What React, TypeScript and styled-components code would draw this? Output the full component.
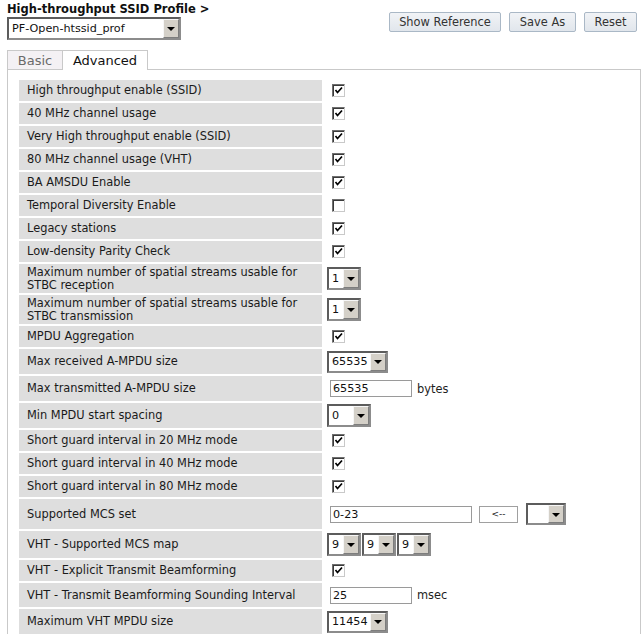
import React from "react";
import styled, { createGlobalStyle } from "styled-components";

const GlobalStyle = createGlobalStyle`
  html, body { margin: 0; padding: 0; background: #fff; }
  body { font-family: "DejaVu Sans", Verdana, sans-serif; font-size: 11px; color: #1e1e1e; }
  * { box-sizing: border-box; }
`;

const Page = styled.div`
  width: 641px;
  padding-left: 7px;
  overflow: hidden;
`;

const Header = styled.div`
  display: flex;
  justify-content: space-between;
  align-items: flex-start;
  padding-right: 4px;
`;

const HeaderLeft = styled.div`
  display: flex;
  flex-direction: column;
`;

const Title = styled.div`
  font-weight: bold;
  font-size: 11.5px;
  line-height: 13px;
  padding-top: 3px;
  color: #101010;
`;

const ButtonBar = styled.div`
  display: flex;
  gap: 8px;
  padding-top: 12px;
`;

const Button = styled.button<{ $w: number }>`
  width: ${(p) => p.$w}px;
  height: 20px;
  padding: 0;
  font-family: "DejaVu Sans", Verdana, sans-serif;
  font-size: 11.4px;
  color: #333;
  background: linear-gradient(#f1f3f6, #e1e6ec);
  border: 1px solid #aab8c6;
  border-radius: 2px;
  cursor: pointer;
`;

const SelectBox = styled.div<{ $w: number; $h?: number }>`
  display: inline-flex;
  width: ${(p) => p.$w}px;
  height: ${(p) => p.$h ?? 22}px;
  border-style: solid;
  border-width: 2px;
  border-color: #5c5c5c #8c8c8c #8c8c8c #5c5c5c;
  background: #fff;
  flex: none;
`;

const SelectValue = styled.div`
  flex: 1;
  display: flex;
  align-items: center;
  padding-left: 3px;
  font-size: 11.2px;
  color: #111;
  white-space: nowrap;
  overflow: hidden;
`;

const SelectArrow = styled.div`
  width: 16px;
  display: flex;
  align-items: center;
  justify-content: center;
  background: #d4d0c8;
  border-style: solid;
  border-width: 1px;
  border-color: #f6f6f6 #7d7d7d #7d7d7d #f6f6f6;
  &::after {
    content: "";
    border-left: 4px solid transparent;
    border-right: 4px solid transparent;
    border-top: 4px solid #000;
    margin-top: 1px;
  }
`;

const Select: React.FC<{ value: string; w: number; h?: number }> = ({ value, w, h }) => (
  <SelectBox $w={w} $h={h}>
    <SelectValue>{value}</SelectValue>
    <SelectArrow />
  </SelectBox>
);

const TopSelectWrap = styled.div`
  margin-top: 1px;
`;

const TabBar = styled.div`
  display: flex;
  margin-top: 10px;
  height: 20px;
  width: 634px;
`;

const Tab = styled.div<{ $active?: boolean; $w: number }>`
  width: ${(p) => p.$w}px;
  display: flex;
  align-items: center;
  justify-content: center;
  font-size: 13px;
  color: ${(p) => (p.$active ? "#111" : "#6a6a6a")};
  background: ${(p) => (p.$active ? "#fff" : "#f4f1f4")};
  border-top: 1px solid #c9c9c9;
  border-left: 1px solid #c9c9c9;
  border-right: ${(p) => (p.$active ? "1px solid #c9c9c9" : "none")};
  border-bottom: ${(p) => (p.$active ? "none" : "1px solid #c9c9c9")};
`;

const TabFiller = styled.div`
  flex: 1;
  border-bottom: 1px solid #c9c9c9;
`;

const Panel = styled.div`
  width: 634px;
  border-left: 1px solid #c9c9c9;
  border-right: 1px solid #c9c9c9;
  padding: 10px 0 0 11px;
`;

const Table = styled.div`
  display: grid;
  grid-template-columns: 303px 1fr;
  column-gap: 2px;
  row-gap: 2px;
`;

const LabelCell = styled.div<{ $h: number }>`
  height: ${(p) => p.$h}px;
  background: #dedede;
  display: flex;
  align-items: center;
  padding: 0 7px 0 8px;
  line-height: 13px;
  font-size: 11.4px;
  color: #1a1a1a;
  white-space: nowrap;
`;

const ValueCell = styled.div`
  display: flex;
  align-items: center;
  padding-left: 3px;
  gap: 1px;
`;

const CheckBoxFrame = styled.span`
  width: 13px;
  height: 13px;
  margin-left: 5px;
  display: inline-flex;
  border-style: solid;
  border-width: 1px;
  border-color: #6f6f6f #c9c9c9 #c9c9c9 #6f6f6f;
  box-shadow: inset 1px 1px 0 #3a3a3a;
  background: #fff;
`;

const CheckBox: React.FC<{ checked?: boolean }> = ({ checked }) => (
  <CheckBoxFrame>
    {checked && (
      <svg width="11" height="11" viewBox="0 0 11 11">
        <path d="M2.5 5 L4.5 7.5 L9 2.5" fill="none" stroke="#000" strokeWidth="1.7" />
      </svg>
    )}
  </CheckBoxFrame>
);

const TextInput = styled.div<{ $w: number }>`
  width: ${(p) => p.$w}px;
  height: 17px;
  margin-left: 3px;
  border: 1px solid #9a9a9a;
  background: #fff;
  display: flex;
  align-items: center;
  padding-left: 2px;
  font-size: 11.2px;
  color: #111;
`;

const Unit = styled.span`
  margin-left: 4px;
  font-size: 11.4px;
`;

const SmallButton = styled.div`
  width: 39px;
  height: 17px;
  margin-left: 6px;
  border: 1px solid #a0a0a0;
  background: #fff;
  display: flex;
  align-items: center;
  justify-content: center;
  font-size: 9px;
  color: #222;
`;

const SelectGap = styled.span`
  width: 6px;
`;

type Row = { label: React.ReactNode; h: number; control: React.ReactNode };

const rows: Row[] = [
  { label: "High throughput enable (SSID)", h: 21, control: <CheckBox checked /> },
  { label: "40 MHz channel usage", h: 21, control: <CheckBox checked /> },
  { label: "Very High throughput enable (SSID)", h: 21, control: <CheckBox checked /> },
  { label: "80 MHz channel usage (VHT)", h: 21, control: <CheckBox checked /> },
  { label: "BA AMSDU Enable", h: 21, control: <CheckBox checked /> },
  { label: "Temporal Diversity Enable", h: 21, control: <CheckBox /> },
  { label: "Legacy stations", h: 21, control: <CheckBox checked /> },
  { label: "Low-density Parity Check", h: 21, control: <CheckBox checked /> },
  {
    label: (
      <span>
        Maximum number of spatial streams usable for
        <br />
        STBC reception
      </span>
    ),
    h: 29,
    control: <Select value="1" w={34} h={23} />,
  },
  {
    label: (
      <span>
        Maximum number of spatial streams usable for
        <br />
        STBC transmission
      </span>
    ),
    h: 29,
    control: <Select value="1" w={34} h={23} />,
  },
  { label: "MPDU Aggregation", h: 21, control: <CheckBox checked /> },
  { label: "Max received A-MPDU size", h: 25, control: <Select value="65535" w={61} /> },
  {
    label: "Max transmitted A-MPDU size",
    h: 25,
    control: (
      <>
        <TextInput $w={82}>65535</TextInput>
        <Unit>bytes</Unit>
      </>
    ),
  },
  { label: "Min MPDU start spacing", h: 25, control: <Select value="0" w={44} h={23} /> },
  { label: "Short guard interval in 20 MHz mode", h: 21, control: <CheckBox checked /> },
  { label: "Short guard interval in 40 MHz mode", h: 21, control: <CheckBox checked /> },
  { label: "Short guard interval in 80 MHz mode", h: 21, control: <CheckBox checked /> },
  {
    label: "Supported MCS set",
    h: 30,
    control: (
      <>
        <TextInput $w={142}>0-23</TextInput>
        <SmallButton>&lt;--</SmallButton>
        <SelectGap />
        <Select value="" w={40} />
      </>
    ),
  },
  {
    label: "VHT - Supported MCS map",
    h: 27,
    control: (
      <>
        <Select value="9" w={34} h={23} />
        <Select value="9" w={34} h={23} />
        <Select value="9" w={34} h={23} />
      </>
    ),
  },
  { label: "VHT - Explicit Transmit Beamforming", h: 21, control: <CheckBox checked /> },
  {
    label: "VHT - Transmit Beamforming Sounding Interval",
    h: 24,
    control: (
      <>
        <TextInput $w={82}>25</TextInput>
        <Unit>msec</Unit>
      </>
    ),
  },
  { label: "Maximum VHT MPDU size", h: 25, control: <Select value="11454" w={61} /> },
];

export default function App() {
  return (
    <>
      <GlobalStyle />
      <Page>
        <Header>
          <HeaderLeft>
            <Title>High-throughput SSID Profile &gt;</Title>
            <TopSelectWrap>
              <Select value="PF-Open-htssid_prof" w={174} h={23} />
            </TopSelectWrap>
          </HeaderLeft>
          <ButtonBar>
            <Button $w={112}>Show Reference</Button>
            <Button $w={67}>Save As</Button>
            <Button $w={53}>Reset</Button>
          </ButtonBar>
        </Header>
        <TabBar>
          <Tab $w={55}>Basic</Tab>
          <Tab $w={86} $active>
            Advanced
          </Tab>
          <TabFiller />
        </TabBar>
        <Panel>
          <Table>
            {rows.map((r, i) => (
              <React.Fragment key={i}>
                <LabelCell $h={r.h}>{r.label}</LabelCell>
                <ValueCell>{r.control}</ValueCell>
              </React.Fragment>
            ))}
          </Table>
        </Panel>
      </Page>
    </>
  );
}
